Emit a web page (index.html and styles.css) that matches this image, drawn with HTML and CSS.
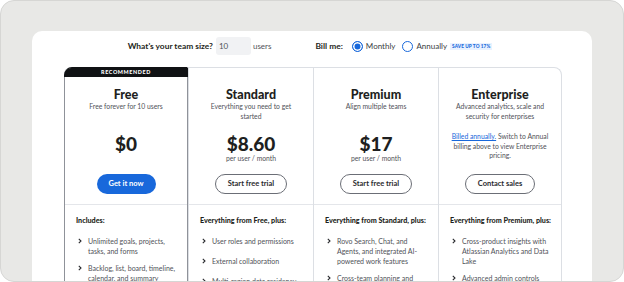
FILE: index.html
```html
<!DOCTYPE html>
<html lang="en">
<head>
<meta charset="utf-8">
<title>Pricing</title>
<link rel="stylesheet" href="styles.css">
</head>
<body>
<div class="frame">
  <div class="card">
    <div class="controls">
      <div class="group">
        <span class="label">What's your team size?</span>
        <span class="input">10</span>
        <span class="unit">users</span>
      </div>
      <div class="group">
        <span class="label bill">Bill me:</span>
        <span class="radio"><span class="dot checked"></span>Monthly</span>
        <span class="radio"><span class="dot"></span>Annually</span>
        <span class="badge">SAVE UP TO 17%</span>
      </div>
    </div>

    <div class="plans">
      <div class="col free">
        <div class="top rec">RECOMMENDED</div>
        <div class="head">
          <div class="title">Free</div>
          <div class="desc">Free forever for 10 users</div>
          <div class="price-area"><div class="price">$0</div></div>
          <span class="btn primary">Get it now</span>
        </div>
        <div class="features">
          <div class="f-head">Includes:</div>
          <ul>
            <li><svg class="chev" viewBox="0 0 4 6"><polyline points="0.8,0.8 3,3 0.8,5.2"/></svg><span>Unlimited goals, projects, tasks, and forms</span></li>
            <li><svg class="chev" viewBox="0 0 4 6"><polyline points="0.8,0.8 3,3 0.8,5.2"/></svg><span>Backlog, list, board, timeline, calendar, and summary</span></li>
          </ul>
        </div>
      </div>

      <div class="col">
        <div class="top"></div>
        <div class="head">
          <div class="title">Standard</div>
          <div class="desc">Everything you need to get started</div>
          <div class="price-area"><div class="price">$8.60</div><div class="per">per user / month</div></div>
          <span class="btn outline">Start free trial</span>
        </div>
        <div class="features">
          <div class="f-head">Everything from Free, plus:</div>
          <ul>
            <li><svg class="chev" viewBox="0 0 4 6"><polyline points="0.8,0.8 3,3 0.8,5.2"/></svg><span>User roles and permissions</span></li>
            <li><svg class="chev" viewBox="0 0 4 6"><polyline points="0.8,0.8 3,3 0.8,5.2"/></svg><span>External collaboration</span></li>
            <li><svg class="chev" viewBox="0 0 4 6"><polyline points="0.8,0.8 3,3 0.8,5.2"/></svg><span>Multi-region data residency</span></li>
          </ul>
        </div>
      </div>

      <div class="col">
        <div class="top"></div>
        <div class="head">
          <div class="title">Premium</div>
          <div class="desc">Align multiple teams</div>
          <div class="price-area"><div class="price">$17</div><div class="per">per user / month</div></div>
          <span class="btn outline">Start free trial</span>
        </div>
        <div class="features">
          <div class="f-head">Everything from Standard, plus:</div>
          <ul>
            <li><svg class="chev" viewBox="0 0 4 6"><polyline points="0.8,0.8 3,3 0.8,5.2"/></svg><span>Rovo Search, Chat, and Agents, and integrated AI-powered work features</span></li>
            <li><svg class="chev" viewBox="0 0 4 6"><polyline points="0.8,0.8 3,3 0.8,5.2"/></svg><span>Cross-team planning and dependency management</span></li>
          </ul>
        </div>
      </div>

      <div class="col last">
        <div class="top"></div>
        <div class="head">
          <div class="title">Enterprise</div>
          <div class="desc">Advanced analytics, scale and security for enterprises</div>
          <div class="price-area note"><a class="link" href="#">Billed annually.</a> Switch to Annual billing above to view Enterprise pricing.</div>
          <span class="btn outline">Contact sales</span>
        </div>
        <div class="features">
          <div class="f-head">Everything from Premium, plus:</div>
          <ul>
            <li><svg class="chev" viewBox="0 0 4 6"><polyline points="0.8,0.8 3,3 0.8,5.2"/></svg><span>Cross-product insights with Atlassian Analytics and Data Lake</span></li>
            <li><svg class="chev" viewBox="0 0 4 6"><polyline points="0.8,0.8 3,3 0.8,5.2"/></svg><span>Advanced admin controls</span></li>
          </ul>
        </div>
      </div>
    </div>
  </div>
</div>
</body>
</html>
```

FILE: styles.css
```css
html, body {
  margin: 0;
  background: #ffffff;
}
body {
  font-family: Lato, "Liberation Sans", sans-serif;
  color: #292a2e;
}
.frame {
  width: 624px;
  height: 282px;
  box-sizing: border-box;
  border: 1px solid #d6d6d4;
  border-radius: 14px;
  background: #e8e8e6;
  overflow: hidden;
  padding: 30px 31px 0 31px;
}
.card {
  background: #ffffff;
  border-radius: 10px;
  height: 300px;
  padding: 6px 30px 0 32px;
}
.controls {
  display: flex;
  justify-content: center;
  gap: 44px;
  height: 18px;
  align-items: center;
  margin-bottom: 12px;
  padding-right: 6px;
}
.group {
  display: flex;
  align-items: center;
  font-size: 8px;
}
.label {
  font-weight: 700;
  font-size: 8.4px;
  color: #1e1f21;
  margin-right: 3px;
}
.label.bill {
  margin-right: 9px;
}
.input {
  width: 35px;
  height: 18px;
  box-sizing: border-box;
  background: #f1f2f4;
  border-radius: 3px;
  padding-left: 3px;
  line-height: 18px;
  color: #505258;
  margin-right: 2px;
}
.unit {
  color: #505258;
}
.radio {
  display: flex;
  align-items: center;
  gap: 3px;
  color: #3b3d42;
  margin-right: 7px;
}
.radio + .radio {
  margin-right: 3px;
}
.dot {
  width: 11px;
  height: 11px;
  box-sizing: border-box;
  border: 1.2px solid #1868db;
  border-radius: 50%;
  background: #fff;
}
.dot.checked {
  border-width: 1.5px;
  background: #1868db;
  box-shadow: inset 0 0 0 1.5px #fff;
}
.badge {
  font-size: 4.7px;
  font-weight: 900;
  color: #1868db;
  background: #e9f2ff;
  padding: 1px 2px;
  line-height: 5px;
  letter-spacing: 0.1px;
}

.plans {
  display: grid;
  grid-template-columns: 124px 125px 125px 124px;
}
.col {
  border-top: 1px solid #dcdfe4;
  border-left: 1px solid #dcdfe4;
}
.col.last {
  border-right: 1px solid #dcdfe4;
  border-top-right-radius: 8px;
}
.col.free {
  border: 1px solid #8f9299;
  border-top: 1px solid #101214;
  border-bottom: none;
  border-top-left-radius: 8px;
}
.top {
  height: 9px;
}
.top.rec {
  height: 9px;
  margin: 0 -1px;
  background: #101214;
  border-top-left-radius: 7px;
  color: #ffffff;
  font-size: 5.4px;
  font-weight: 900;
  letter-spacing: 0.6px;
  line-height: 9px;
  text-align: center;
}
.head {
  height: 128px;
  box-sizing: border-box;
  padding: 11px 11px 0 11px;
  border-bottom: 1px solid #e4e6ea;
  display: flex;
  flex-direction: column;
  align-items: center;
  text-align: center;
}
.title {
  font-size: 12.5px;
  font-weight: 900;
  line-height: 13px;
  color: #1e1f21;
}
.desc {
  font-size: 6.8px;
  line-height: 10px;
  height: 20px;
  max-width: 97px;
  color: #505258;
}
.price-area {
  height: 42px;
  box-sizing: border-box;
  padding-top: 13px;
}
.price {
  font-size: 19px;
  font-weight: 900;
  line-height: 20px;
  color: #1e1f21;
}
.per {
  font-size: 6.8px;
  line-height: 9px;
  color: #505258;
}
.price-area.note {
  padding-top: 11px;
  font-size: 6.8px;
  line-height: 9.5px;
  color: #505258;
}
.link {
  color: #1868db;
  text-decoration: underline;
}
.btn {
  margin-top: 11px;
  height: 20px;
  box-sizing: border-box;
  border-radius: 10px;
  padding: 0 12px;
  font-size: 7.5px;
  line-height: 20px;
  font-weight: 700;
  white-space: nowrap;
}
.btn.primary {
  background: #1868db;
  color: #ffffff;
}
.btn.outline {
  border: 1px solid #6b6e76;
  line-height: 18px;
  color: #292a2e;
}
.features {
  padding: 11px 6px 0 11px;
}
.f-head {
  font-size: 7.2px;
  font-weight: 900;
  line-height: 10px;
  color: #1e1f21;
  margin-bottom: 9.5px;
  white-space: nowrap;
}
.features ul {
  list-style: none;
  margin: 0;
  padding: 0 0 0 2px;
  display: flex;
  flex-direction: column;
  gap: 7px;
}
.features li {
  display: flex;
  align-items: flex-start;
  min-height: 13px;
  font-size: 7px;
  line-height: 10px;
  color: #505258;
}
.chev {
  flex: none;
  width: 4px;
  height: 6px;
  margin: 2px 6px 0 0;
  fill: none;
  stroke: #292a2e;
  stroke-width: 1.1;
}
```
